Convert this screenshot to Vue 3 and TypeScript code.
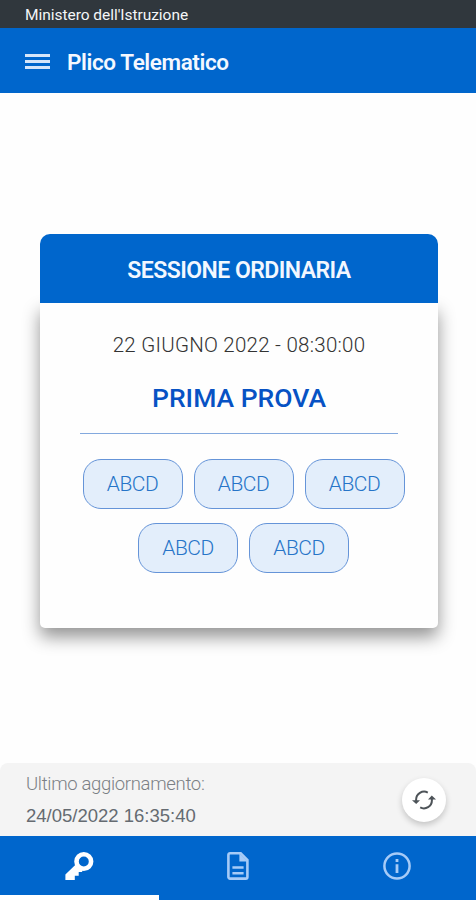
<script setup lang="ts">
const codes: string[][] = [
  ['ABCD', 'ABCD', 'ABCD'],
  ['ABCD', 'ABCD'],
]
</script>

<template>
  <div class="screen">
    <div class="ministry"><span>Ministero dell'Istruzione</span></div>
    <header class="topbar">
      <button class="menu" aria-label="Menu"><i></i><i></i><i></i></button>
      <h1>Plico Telematico</h1>
    </header>

    <main class="content">
      <section class="card">
        <h2 class="card-head"><span>SESSIONE ORDINARIA</span></h2>
        <div class="card-body">
          <p class="date"><span>22 GIUGNO 2022 - 08:30:00</span></p>
          <h3 class="exam"><span>PRIMA PROVA</span></h3>
          <div class="rule"></div>
          <div class="codes">
            <div v-for="(row, r) in codes" :key="r" class="code-row">
              <div v-for="(code, c) in row" :key="c" class="code"><span>{{ code }}</span></div>
            </div>
          </div>
        </div>
      </section>
    </main>

    <div class="update">
      <div class="update-text">
        <p class="label">Ultimo aggiornamento:</p>
        <p class="stamp">24/05/2022 16:35:40</p>
      </div>
      <button class="refresh" aria-label="Aggiorna">
        <svg width="26" height="22" viewBox="0 0 26 22" fill="none" stroke="#4d5358" stroke-width="2">
          <path d="M5.1 12V10.8A8 8 0 0 1 16.8 3.6" />
          <path d="M20.9 10V11.2A8 8 0 0 1 9.2 18.4" />
          <path d="M1 11.2h8L5.2 15z" fill="#4d5358" stroke="none" />
          <path d="M17 10.6h8L20.8 6.4z" fill="#4d5358" stroke="none" />
        </svg>
      </button>
    </div>

    <nav class="tabs">
      <button class="tab active" aria-label="Chiave">
        <svg width="30" height="30" viewBox="0 0 30 30">
          <circle cx="19.8" cy="10.5" r="7.3" fill="none" stroke="#fff" stroke-width="4.6" />
          <path d="M12 13.3L1.4 23.4V29h9.4v-4.2h3.9v-3.7h3.1l1.1-1.5z" fill="#fff" />
        </svg>
      </button>
      <button class="tab" aria-label="Documenti">
        <svg width="22" height="28" viewBox="0 0 22 28" fill="none" stroke="#a6cbf7" stroke-width="2.6">
          <path d="M3 1.3H13.7L20.4 8V25a1.6 1.6 0 0 1-1.6 1.6H3A1.6 1.6 0 0 1 1.4 25V2.9A1.6 1.6 0 0 1 3 1.3z" />
          <path d="M12.4 1.5V9.5h8z" fill="#a6cbf7" stroke="none" />
          <path d="M5.4 15.5h11.2M5.4 21.3h11.2" />
        </svg>
      </button>
      <button class="tab" aria-label="Informazioni">
        <svg width="28" height="28" viewBox="0 0 28 28" fill="none" stroke="#a6cbf7" stroke-width="2.5">
          <circle cx="14" cy="14" r="12.6" />
          <path d="M14 12.2V21M14 7v3" stroke-width="2.8" />
        </svg>
      </button>
    </nav>
  </div>
</template>

<style>
body {
  margin: 0;
  background: #fefefe;
}
</style>

<style scoped>
.screen {
  display: flex;
  flex-direction: column;
  width: 476px;
  height: 900px;
  overflow: hidden;
  background: #fefefe;
  font-family: Roboto, 'Open Sans', sans-serif;
}
h1, h2, h3, p {
  margin: 0;
  white-space: nowrap;
}
button {
  border: 0;
  padding: 0;
  background: none;
}
.ministry {
  height: 28px;
  padding-left: 25px;
  background: #30373d;
  color: #f4f6f8;
  font-size: 15.5px;
  line-height: 30px;
  letter-spacing: -0.04px;
}
.topbar {
  display: flex;
  align-items: center;
  gap: 17px;
  height: 65px;
  padding-left: 25px;
  background: #0066cc;
}
.menu {
  display: flex;
  flex-direction: column;
  gap: 3px;
  width: 25px;
  padding-top: 2px;
}
.menu i {
  height: 3px;
  background: #d6e6fa;
}
h1 {
  padding-top: 3px;
  color: #f4f8ff;
  font-size: 22.5px;
  font-weight: 600;
  letter-spacing: -0.4px;
}
.content {
  flex: 1;
  padding: 141px 38px 0 40px;
}
.card {
  display: flex;
  flex-direction: column;
  height: 394px;
}
.card-head {
  z-index: 1;
  height: 69px;
  border-radius: 10px 10px 0 0;
  background: #0066cc;
  color: #f2f7ff;
  font-size: 23px;
  font-weight: 600;
  line-height: 73px;
  letter-spacing: -0.55px;
  text-align: center;
}
.card-body {
  flex: 1;
  border-radius: 0 0 5px 5px;
  background: #fefefe;
  box-shadow: 0 9px 17px rgba(0, 0, 0, 0.42);
  text-align: center;
}
.date {
  padding-top: 27px;
  color: #333;
  font-size: 20.5px;
  font-weight: 300;
  line-height: 30px;
  letter-spacing: 0.25px;
}
.exam {
  padding-top: 20px;
  color: #0752c4;
  font-size: 26.5px;
  font-weight: 500;
  line-height: 36px;
}
.rule {
  height: 1px;
  margin: 17px 40px 0;
  background: #83a9de;
}
.codes {
  display: flex;
  flex-direction: column;
  gap: 14px;
  padding: 25px 0 0 9px;
}
.code-row {
  display: flex;
  justify-content: center;
  gap: 11px;
}
.code {
  box-sizing: border-box;
  width: 100px;
  height: 50px;
  border: 1px solid #6594d8;
  border-radius: 18px;
  background: #e3eefb;
  color: #2674c8;
  font-size: 21px;
  font-weight: 300;
  line-height: 49px;
  letter-spacing: -0.5px;
}
.update {
  display: flex;
  justify-content: space-between;
  height: 73px;
  padding: 0 30px 0 26px;
  border-radius: 8px 8px 0 0;
  background: #f4f4f4;
}
.update-text {
  padding-top: 6px;
}
.label {
  color: #7b8085;
  font-size: 18.5px;
  font-weight: 300;
  line-height: 31px;
  letter-spacing: -0.32px;
}
.stamp {
  color: #656b71;
  font-family: 'Liberation Sans', Arial, sans-serif;
  font-size: 18.5px;
  line-height: 31px;
}
.refresh {
  display: flex;
  align-items: center;
  justify-content: center;
  width: 44px;
  height: 44px;
  margin-top: 15px;
  border-radius: 50%;
  background: #fff;
  box-shadow: 0 3px 6px rgba(0, 0, 0, 0.2);
}
.tabs {
  display: grid;
  grid-template-columns: repeat(3, 1fr);
  height: 64px;
  background: #0066cc;
}
.tab {
  box-sizing: border-box;
  display: flex;
  align-items: center;
  justify-content: center;
  border-bottom: 5px solid transparent;
}
.tab.active {
  border-bottom-color: #fff;
}
</style>
